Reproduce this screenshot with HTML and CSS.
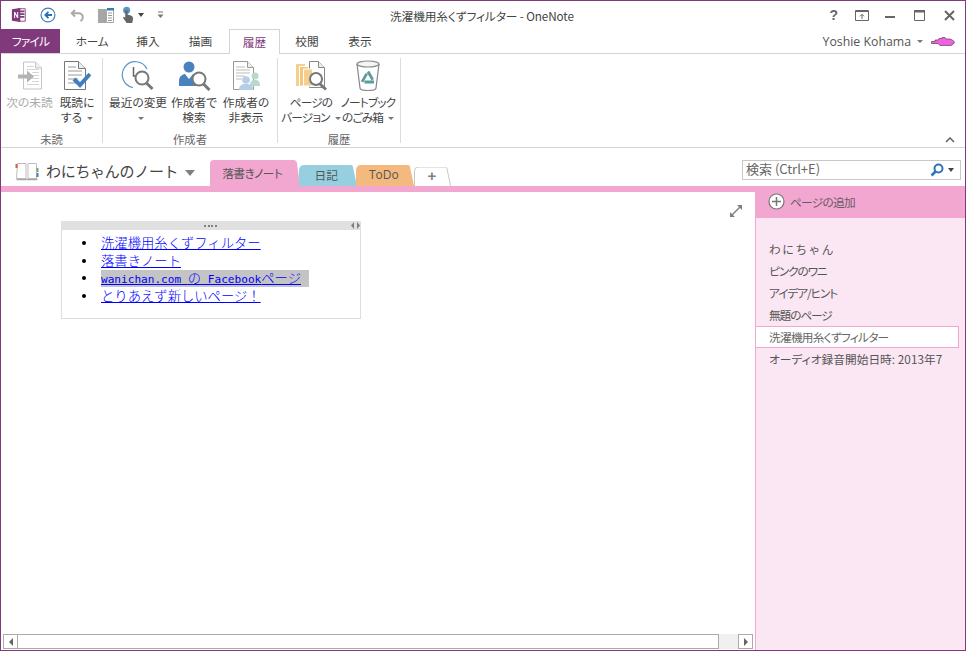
FILE: index.html
```html
<!DOCTYPE html>
<html lang="ja">
<head>
<meta charset="utf-8">
<title>OneNote</title>
<link rel="stylesheet" href="styles.css">
</head>
<body>
<div class="window">
  <header class="titlebar">
    <div class="qat">
      <svg class="q-logo" width="16" height="16" viewBox="0 0 18 18"><path d="M8 2h8v14H8z" fill="#fff" stroke="#80397B"/><path d="M10 5h5M10 8h5M10 11h5" stroke="#80397B" stroke-width="2"/><path d="M1 2.500 10.500 1v16L1 15.500z" fill="#80397B"/><path d="M3.500 12.500v-7h1.200l2.300 4.300V5.500h1.100v7H6.900L4.600 8.200v4.300z" fill="#fff"/></svg>
      <svg class="q-back" width="16" height="16" viewBox="0 0 18 18"><circle cx="9" cy="9" r="7.800" fill="#fff" stroke="#3f7fc0" stroke-width="1.300"/><path d="M13.500 9H6M9.500 5.500 6 9l3.500 3.500" fill="none" stroke="#2a6fb5" stroke-width="2"/></svg>
      <svg class="q-undo" width="16" height="16" viewBox="0 0 16 16"><path d="M5 3 1.800 6.200 5 9.500" fill="none" stroke="#aaa" stroke-width="2"/><path d="M2.500 6.200h6.300a4 4 0 0 1 4 4c0 1.500-.8 3-2.300 3.800" fill="none" stroke="#aaa" stroke-width="2"/></svg>
      <svg class="q-dock" width="16" height="15" viewBox="0 0 16 15"><path d="M0 1h8v14H0z" fill="#a6a6a6"/><path d="M8.500 1.500h7v13h-7z" fill="#fff" stroke="#a6a6a6"/><path d="M9 0h7v2.500H9z" fill="#3a7ab8"/><path d="M10 5h4M10 7.500h4M10 10h4M10 12.500h4" stroke="#999"/></svg>
      <svg class="q-touch" width="13" height="18" viewBox="0 0 14 18"><circle cx="5" cy="4" r="3.800" fill="#5a94cf"/><path d="M3.500 4h2.500v4.500l5 1.500 1 3-1 4.500H5L1 12l1 -1 1.500 1z" fill="#666"/></svg>
      <span class="caret c-dark q-c1"></span>
      <svg class="q-more" width="7" height="8" viewBox="0 0 7 8"><path d="M1 1h5" stroke="#777"/><path d="M0.500 3.500h6L3.500 7z" fill="#777"/></svg>
    </div>
    <div class="doc-title">洗濯機用糸くずフィルター - OneNote</div>
    <div class="controls">
      <span class="help">?</span>
      <svg class="win-ribbon" width="14" height="11" viewBox="0 0 14 11"><path d="M.5.500h13v10H.500z" fill="none" stroke="#666"/><path d="M1 1.500h12" stroke="#666"/><path d="M7 9V4.500M5 6.300 7 4.300l2 2" fill="none" stroke="#666"/></svg>
      <svg class="win-min" width="10" height="3" viewBox="0 0 10 3"><path d="M0 0h10v2H0z" fill="#666"/></svg>
      <svg class="win-max" width="11" height="11" viewBox="0 0 11 11"><path d="M.5.500h10v10H.500z" fill="none" stroke="#666"/><path d="M0 0h11v2.500H0z" fill="#666"/></svg>
      <svg class="win-close" width="11" height="11" viewBox="0 0 11 11"><path d="M1 1l9 9M10 1l-9 9" stroke="#666" stroke-width="2"/></svg>
    </div>
  </header>

  <nav class="tabrow">
    <div class="rtab file">ファイル</div>
    <div class="rtab w-home">ホーム</div>
    <div class="rtab w-ins">挿入</div>
    <div class="rtab w-draw">描画</div>
    <div class="rtab active">履歴</div>
    <div class="rtab w-rev">校閲</div>
    <div class="rtab w-view">表示</div>
    <div class="user">
      <span>Yoshie Kohama</span>
      <span class="caret c-light"></span>
      <svg width="24" height="9" viewBox="0 0 24 9"><path d="M.5 4.500h3.500V3h3l1-1.500h3V.5h3l1 1.500h4l2.500 1 2 2-1 2-2.500 1.500H9L7 6.500H.5z" fill="#f060e0" stroke="#403040" stroke-width=".6"/></svg>
    </div>
  </nav>

  <section class="ribbon">
    <div class="group g-unread">
      <div class="btns">
        <div class="btn b-next disabled">
          <svg width="26" height="30" viewBox="0 0 26 30"><path d="M6.500 1.500h12l6 6v21h-18z" fill="#fff" stroke="#c4c4c4"/><path d="M18.500 1.500v6h6" fill="#eee" stroke="#c4c4c4"/><path d="M10 6h7M10 9h12M15 12h7M15 15h7M15 18h7M15 21h7M10 24h12" stroke="#d5d5d5"/><path d="M1 14h9v-4l7 6-7 6v-4H1z" fill="#b3b3b3"/></svg>
          <span class="lbl">次の未読</span>
        </div>
        <div class="btn b-read">
          <svg width="28" height="31" viewBox="0 0 28 31"><path d="M1.500 1.500h14l7 7v21h-21z" fill="#fff" stroke="#777"/><path d="M15.500 1.500v7h7" fill="#eee" stroke="#777"/><path d="M5 7h8M5 11h14M5 15h14M5 19h10M5 23h8" stroke="#999"/><path d="M11 19l6 6L27 14" fill="none" stroke="#3f7fc0" stroke-width="4"/></svg>
          <span class="lbl">既読に<br>する<i class="caret c-light"></i></span>
        </div>
      </div>
      <div class="glabel">未読</div>
    </div>
    <div class="group g-author">
      <div class="btns">
        <div class="btn b-recent">
          <svg width="34" height="31" viewBox="0 0 34 31"><path d="M12 27.500A13 13 0 1 1 26 9" fill="#fff" stroke="#5a94cf" stroke-width="1.200"/><path d="M12.500 7v9h5" fill="none" stroke="#666" stroke-width="1.500"/><circle cx="21" cy="18" r="6.500" fill="#fff" stroke="#777" stroke-width="2"/><path d="M25.500 23l6 6" stroke="#777" stroke-width="3"/></svg>
          <span class="lbl">最近の変更<br><i class="caret c-light"></i></span>
        </div>
        <div class="btn b-search">
          <svg width="34" height="31" viewBox="0 0 34 31"><circle cx="12" cy="7" r="5.500" fill="#4a82bd"/><path d="M2 26v-5c0-5 4-7 6-7l4 5 4-5c2 0 4 1 5 3v9z" fill="#4a82bd"/><circle cx="22" cy="19" r="6.500" fill="#fff" stroke="#777" stroke-width="2"/><path d="M26.500 24l6 6" stroke="#777" stroke-width="3"/></svg>
          <span class="lbl">作成者で<br>検索</span>
        </div>
        <div class="btn b-hide">
          <svg width="28" height="31" viewBox="0 0 28 31"><path d="M1.500 1.500h14l6 6v22h-20z" fill="#fff" stroke="#999"/><path d="M15.500 1.500v6h6" fill="#eee" stroke="#999"/><path d="M4 7h9M4 10h14M4 13h14M4 16h9M4 19h6" stroke="#bbb"/><circle cx="23" cy="16" r="3.500" fill="#bcd8cc"/><path d="M18 26c0-5 2-6 5-6s5 1 5 6z" fill="#bcd8cc"/><circle cx="14" cy="20" r="3.800" fill="#b4cde8"/><path d="M7 30c0-5 3-6 7-6s7 1 7 6z" fill="#b4cde8"/></svg>
          <span class="lbl">作成者の<br>非表示</span>
        </div>
      </div>
      <div class="glabel">作成者</div>
    </div>
    <div class="group g-hist">
      <div class="btns">
        <div class="btn b-ver">
          <svg width="31" height="31" viewBox="0 0 31 31"><path d="M13.500 1.500h9l6 6v20h-15z" fill="#fff" stroke="#888"/><path d="M22.500 1.500v6h6" fill="#eee" stroke="#888"/><path d="M0 4h9v22H0z" fill="#f5cf90"/><path d="M3.500 6.500h9v19.500h-9z" fill="#f3c77e" stroke="#fff"/><path d="M7.500 9h9v17h-9z" fill="#f5cf90" stroke="#fff"/><circle cx="20" cy="19" r="6" fill="#fff" stroke="#777" stroke-width="2"/><path d="M24 24l6 5.500" stroke="#777" stroke-width="3"/></svg>
          <span class="lbl tight">ページの<br>バージョン<i class="caret c-light"></i></span>
        </div>
        <div class="btn b-trash">
          <svg width="24" height="31" viewBox="0 0 24 31"><path d="M1 4l3 24c0 1.500 4 2.500 8 2.500s8-1 8-2.500l3-24" fill="#fff" stroke="#888" stroke-width="1.200"/><ellipse cx="12" cy="4" rx="11" ry="3" fill="#f4f4f4" stroke="#888" stroke-width="1.200"/><path d="M12 11.500 18 22H6z" fill="none" stroke="#5b9e98" stroke-width="2.800" stroke-dasharray="9.500 2.600"/></svg>
          <span class="lbl tight">ノートブック<br>のごみ箱<i class="caret c-light"></i></span>
        </div>
      </div>
      <div class="glabel">履歴</div>
    </div>
    <svg class="collapse" width="10" height="6" viewBox="0 0 10 6"><path d="M1 5l4-4 4 4" fill="none" stroke="#666" stroke-width="1.600"/></svg>
  </section>

  <section class="nbbar">
    <svg class="nb-icon" width="24" height="19" viewBox="0 0 24 19"><path d="M2.500 1.500h8.500v15H1.500zM13 1.500h8.500v15H13z" fill="#fff" stroke="#bdbdbd"/><path d="M1.500 17.500h21" stroke="#a8a8a8" stroke-width="1.500"/><path d="M.5 2h2v4h-2z" fill="#d9603a"/><path d="M21.500 6h2v4h-2z" fill="#7aa85f"/><path d="M21.500 11h2v4h-2z" fill="#3f7fc0"/></svg>
    <div class="nb-name">わにちゃんのノート</div>
    <span class="nb-caret"></span>
    <div class="stabs">
      <div class="stab s-rak">
        <svg class="tabshape" viewBox="0 0 90 26" preserveAspectRatio="none"><path d="M0 26V4a4 4 0 0 1 4-4h79a4 4 0 0 1 4 3l3 23z" fill="#f2a7d1"/></svg>
        <span>落書きノート</span>
      </div>
      <div class="stab s-nik">
        <svg class="tabshape" viewBox="0 0 58 21" preserveAspectRatio="none"><path d="M0 21V5a5 5 0 0 1 5-5h47a2 2 0 0 1 2 2l4 19z" fill="#96d0e0"/></svg>
        <span>日記</span>
      </div>
      <div class="stab s-todo">
        <svg class="tabshape" viewBox="0 0 58 21" preserveAspectRatio="none"><path d="M0 21V5a5 5 0 0 1 5-5h47a2 2 0 0 1 2 2l4 19z" fill="#f4b97f"/></svg>
        <span>ToDo</span>
      </div>
      <div class="stab s-add">
        <svg class="tabshape" viewBox="0 0 37 19" preserveAspectRatio="none"><path d="M.5 19V4a4 4 0 0 1 4-4h27a2 2 0 0 1 1.500 1.500L36.500 19" fill="#fff" stroke="#c8c8c8"/></svg>
        <span class="plus">+</span>
      </div>
    </div>
    <div class="search">
      <span class="s-text">検索 (Ctrl+E)</span>
      <svg width="14" height="14" viewBox="0 0 14 14"><circle cx="8.500" cy="5.500" r="4" fill="#fff" stroke="#2f74b5" stroke-width="2"/><path d="M5.500 8.500 1.500 12.500" stroke="#2f74b5" stroke-width="2.500"/></svg>
      <span class="caret c-dark"></span>
    </div>
  </section>

  <div class="workspace">
    <main class="main">
      <div class="stripe"></div>
      <div class="page">
        <svg class="expand" width="12" height="12" viewBox="0 0 12 12"><path d="M1.500 10.500l9-9" stroke="#808080" stroke-width="1.500"/><path d="M7 0h5v5zM0 7v5h5z" fill="#808080"/></svg>
        <div class="note">
          <div class="note-head">
            <span class="dots"></span>
            <svg class="note-arrows" width="9" height="7" viewBox="0 0 9 7"><path d="M3 0v7L0 3.500zM6 0v7l3-3.500z" fill="#808080"/></svg>
          </div>
          <ul class="links">
            <li><a href="#">洗濯機用糸くずフィルター</a></li>
            <li><a href="#">落書きノート</a></li>
            <li><span class="hl"><a href="#"><span class="mono">wanichan.com </span>の<span class="mono"> Facebook</span>ページ</a></span></li>
            <li><a href="#">とりあえず新しいページ！</a></li>
          </ul>
        </div>
      </div>
      <div class="hscroll">
        <div class="sb-btn"><span class="tri-l"></span></div>
        <div class="sb-thumb"></div>
        <div class="sb-track"></div>
        <div class="sb-btn"><span class="tri-r"></span></div>
      </div>
    </main>
    <aside class="side">
      <div class="addpage">
        <svg width="17" height="17" viewBox="0 0 17 17"><circle cx="8.500" cy="8.500" r="7.500" fill="#fff" stroke="#777" stroke-width="1.200"/><path d="M8.500 4v9M4 8.500h9" stroke="#777" stroke-width="1.500"/></svg>
        <span>ページの追加</span>
      </div>
      <ul class="pages">
        <li class="wide">わにちゃん</li>
        <li>ピンクのワニ</li>
        <li>アイデア/ヒント</li>
        <li>無題のページ</li>
        <li class="current">洗濯機用糸くずフィルター</li>
        <li class="audio">オーディオ録音開始日時: 2013年7</li>
      </ul>
    </aside>
  </div>
</div>
</body>
</html>
```
FILE: styles.css
```css
* { box-sizing: border-box; }
html, body { margin: 0; padding: 0; }
body {
  background: #fff;
  font-family: "Noto Sans CJK JP", "Noto Sans", sans-serif;
  font-feature-settings: "palt";
  color: #444;
  overflow: hidden;
}
.window {
  width: 966px;
  height: 651px;
  border: 1px solid #80397b;
  display: flex;
  flex-direction: column;
  background: #fff;
}
svg { display: block; flex: none; }

/* title bar */
.titlebar { height: 28px; flex: none; position: relative; display: flex; align-items: center; }
.qat { display: flex; align-items: center; padding-left: 10px; }
.q-back { margin-left: 13px; }
.q-undo { margin-left: 14px; }
.q-dock { margin-left: 12px; }
.q-touch { margin-left: 8px; }
.q-c1 { margin-left: 3px; }
.q-more { margin-left: 13px; }
.doc-title {
  position: absolute; left: 389px; top: 6px;
  font-size: 11.700px; line-height: 18px; letter-spacing: -.1px; color: #444; white-space: nowrap;
}
.controls { margin-left: auto; display: flex; align-items: center; padding-right: 10px; gap: 19px; }
.help { font: bold 14px/16px "Liberation Sans", sans-serif; color: #666; margin-right: -2px; }
.win-ribbon { margin-right: -3px; }
.win-min { margin-top: 4px; }

.caret { display: inline-block; width: 0; height: 0; border-style: solid; border-width: 3px 3px 0; border-color: #666 transparent transparent; }
.c-dark { border-top-color: #444; border-width: 4px 3.500px 0; }
.c-light { border-top-color: #777; }

/* ribbon tabs */
.tabrow { height: 25px; flex: none; display: flex; border-bottom: 1px solid #d4d4d4; font-size: 11.700px; }
.rtab { height: 25px; line-height: 23px; text-align: center; color: #444; flex: none; }
.rtab.file { width: 59px; height: 24px; background: #80397b; color: #fff; letter-spacing: -.8px; }
.w-home { width: 64px; letter-spacing: -.3px; }
.w-ins { width: 48px; }
.w-draw { width: 57px; }
.rtab.active { width: 51px; border: 1px solid #d4d4d4; border-bottom: 0; background: #fff; color: #80397b; }
.w-rev { width: 54px; }
.w-view { width: 52px; }
.user { margin-left: auto; display: flex; align-items: center; height: 24px; padding-right: 10px; font: 12.300px "Open Sans", sans-serif; color: #555; }
.user .caret { margin: 0 8px 0 6px; }

/* ribbon */
.ribbon { height: 94px; flex: none; display: flex; border-bottom: 1px solid #d4d4d4; position: relative; }
.group { display: flex; flex-direction: column; border-right: 1px solid #dcdcdc; height: 85px; margin-top: 4px; flex: none; }
.g-unread { width: 102px; }
.g-author { width: 175px; }
.g-hist { width: 123px; }
.btns { display: flex; height: 74px; }
.btn { display: flex; flex-direction: column; align-items: center; flex: none; }
.btn svg { height: 31px; margin-top: 2px; }
.lbl { font-size: 11.700px; line-height: 14.500px; text-align: center; color: #444; margin-top: 4px; white-space: nowrap; }
.lbl.tight { letter-spacing: -.85px; }
.lbl i { margin-left: 5px; vertical-align: middle; }
.disabled .lbl { color: #aaa; }
.b-next { width: 52px; padding-left: 5px; }
.b-read { width: 48px; }
.b-recent { width: 62px; margin-left: 4px; }
.b-search { width: 50px; }
.b-hide { width: 54px; }
.b-ver { width: 58px; margin-left: 4px; }
.b-trash { width: 56px; }
.glabel { height: 11px; line-height: 14px; text-align: center; font-size: 11.300px; color: #666; }
.collapse { position: absolute; right: 10px; bottom: 4px; }

/* notebook bar */
.nbbar { height: 38px; flex: none; display: flex; align-items: flex-end; position: relative; }
.nb-icon { margin: 0 0 5px 14px; }
.nb-name { font-size: 15px; font-feature-settings: normal; line-height: 24px; letter-spacing: -.3px; color: #444; margin: 0 0 3px 7px; white-space: nowrap; }
.nb-caret { width: 0; height: 0; border-style: solid; border-width: 6px 5px 0; border-color: #808080 transparent transparent; margin: 0 0 10px 7px; }
.stabs { display: flex; align-items: flex-end; margin-left: 15px; }
.stab { position: relative; display: flex; align-items: center; justify-content: center; font-size: 11.700px; color: #555; flex: none; padding-bottom: 2px; }
.stab span { position: relative; }
.tabshape { position: absolute; inset: 0; width: 100%; height: 100%; }
.s-rak { width: 90px; height: 26px; padding-right: 6px; margin-right: -1px; letter-spacing: -.5px; }
.s-nik { width: 58px; height: 21px; margin-right: -1px; padding-right: 4px; }
.s-todo { width: 58px; height: 21px; padding-right: 3px; font-family: "Open Sans", sans-serif; font-size: 12px; }
.s-add { width: 37px; height: 19px; padding-right: 2px; }
.plus { font: bold 15px/15px "Liberation Sans", sans-serif; color: #808080; }
.search {
  position: absolute; left: 741px; top: 12px; width: 219px; height: 20px;
  border: 1px solid #c8c8c8; background: #fff;
  display: flex; align-items: center; padding: 0 6px 0 3px;
  font-size: 13px; color: #666;
}
.s-text { flex: 1; line-height: 14px; margin-top: -3px; }
.search .caret { margin-left: 4px; }

/* workspace */
.workspace { flex: 1; min-height: 0; display: flex; }
.main { width: 754px; flex: none; display: flex; flex-direction: column; }
.stripe { height: 6px; flex: none; background: #f2a7d1; }
.page { flex: 1; position: relative; padding: 29px 0 0 60px; min-height: 0; }
.expand { position: absolute; left: 729px; top: 13px; }
.note { width: 300px; height: 98px; border: 1px solid #dddddd; border-top: 0; }
.note-head { height: 9px; background: #e0e0e0; margin: 0 -1px; position: relative; display: flex; justify-content: center; align-items: center; }
.dots { width: 14px; height: 2px; background: repeating-linear-gradient(90deg, #808080 0 2px, transparent 2px 3.600px); }
.note-arrows { position: absolute; right: 1px; top: 1px; }
.links { margin: 4px 0 0; padding: 0 0 0 39px; list-style: none; font-size: 13.330px; line-height: 17.500px; font-feature-settings: normal; font-weight: 300; }
.links li { height: 17.500px; color: #000; white-space: nowrap; position: relative; }
.links li::before { content: ""; display: inline-block; width: 4px; height: 4px; border-radius: 50%; background: #000; margin-left: -19px; margin-right: 15px; vertical-align: 3px; }
.links a { color: #0000ff; text-decoration: underline; }
.mono { font-family: "DejaVu Sans Mono", monospace; font-size: 11.100px; font-weight: 400; white-space: pre; }
.hl { background: #c4c4c4; padding-right: 8px; display: inline-block; height: 17px; line-height: 16px; }
.hscroll { height: 15px; flex: none; margin: 0 2px 1px 2px; display: flex; background: #f0f0f0; }
.sb-btn { width: 15px; flex: none; border: 1px solid #ababab; background: #fff; display: flex; align-items: center; justify-content: center; }
.sb-thumb { width: 701px; flex: none; border: 1px solid #ababab; border-left: 0; background: #fff; }
.sb-track { flex: 1; }
.tri-l, .tri-r { width: 0; height: 0; border-style: solid; border-color: transparent; }
.tri-l { border-width: 4px 4px 4px 0; border-right-color: #666; }
.tri-r { border-width: 4px 0 4px 4px; border-left-color: #666; }

/* page list */
.side { flex: 1; display: flex; flex-direction: column; background: #fbe6f3; border-left: 1px solid #f2a7d1; }
.addpage { height: 32px; flex: none; background: #f2a7d1; display: flex; align-items: center; padding: 0 0 1px 13px; gap: 5px; font-size: 11.700px; letter-spacing: -.7px; color: #6a5a64; margin-left: -1px; }
.pages { list-style: none; margin: 20px 0 0; padding: 0; font-size: 11.700px; letter-spacing: -1.100px; color: #555; }
.pages li { height: 22px; line-height: 22px; padding-left: 13px; white-space: nowrap; overflow: hidden; }
.pages li.wide { letter-spacing: 1.500px; font-feature-settings: normal; }
.pages li.current { background: #fff; border: 1px solid #f2a7d1; border-left: 0; width: 203px; line-height: 20px; letter-spacing: -.75px; color: #666; }
.pages li.audio { letter-spacing: .05px; }
```
